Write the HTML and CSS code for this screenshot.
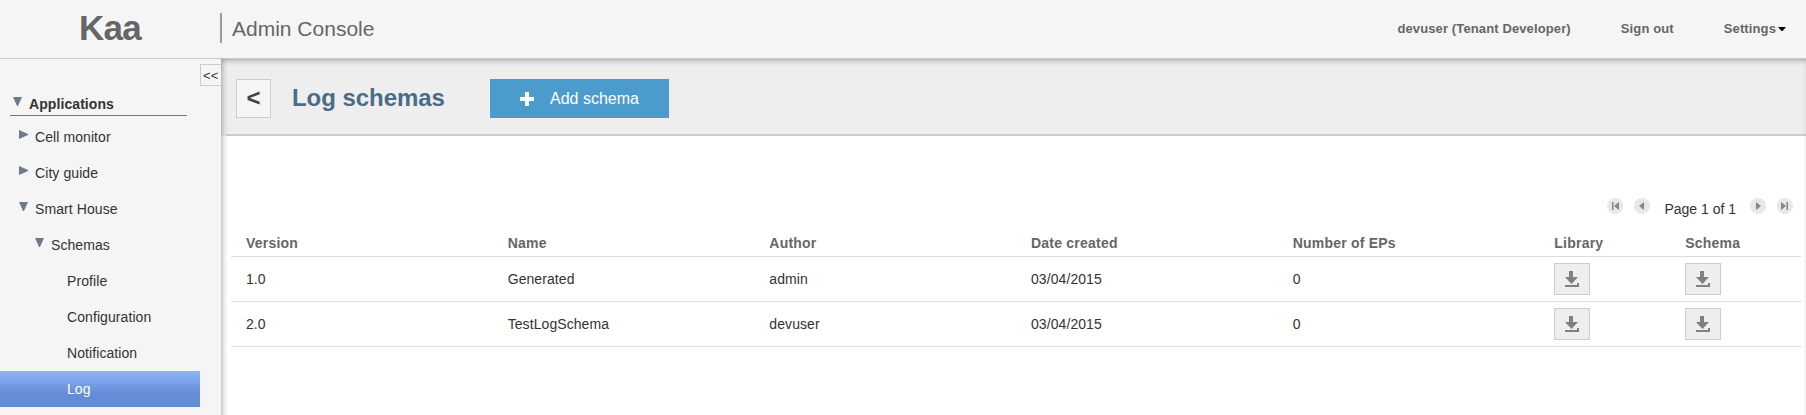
FILE: index.html
```html
<!DOCTYPE html>
<html lang="en">
<head>
<meta charset="utf-8">
<title>Kaa Admin Console</title>
<link rel="stylesheet" href="styles.css">
</head>
<body>
<svg class="defs" width="0" height="0">
  <symbol id="down" viewBox="0 0 9 9"><path d="M0 0h9L5 9H4z"/></symbol>
  <symbol id="right" viewBox="0 0 9 9"><path d="M0 0L9 4v1L0 9z"/></symbol>
  <symbol id="download" viewBox="0 0 14 16"><path d="M4 0h4v6h5L6.500 13 0 6h4zM0 14h12v-2h2v4H0z"/></symbol>
</svg>
<header class="header">
  <div class="logo">Kaa</div>
  <div class="console">Admin Console</div>
  <nav class="usernav">
    <span class="user">devuser (Tenant Developer)</span>
    <span class="signout">Sign out</span>
    <span class="settings">Settings<svg class="caret" width="8" height="4" viewBox="0 0 8 4"><path d="M0 0h8L4.500 4h-1z"/></svg></span>
  </nav>
</header>
<div class="body">
  <aside class="sidebar">
    <div class="collapse">&lt;&lt;</div>
    <div class="root"><svg class="arrow"><use href="#down"/></svg>Applications</div>
    <div class="item level1"><svg class="arrow"><use href="#right"/></svg>Cell monitor</div>
    <div class="item level1"><svg class="arrow"><use href="#right"/></svg>City guide</div>
    <div class="item level1"><svg class="arrow"><use href="#down"/></svg>Smart House</div>
    <div class="item level2"><svg class="arrow"><use href="#down"/></svg>Schemas</div>
    <div class="item leaf">Profile</div>
    <div class="item leaf">Configuration</div>
    <div class="item leaf">Notification</div>
    <div class="item leaf selected">Log</div>
  </aside>
  <main class="content">
    <div class="toolbar">
      <button class="back">&lt;</button>
      <h1 class="title">Log schemas</h1>
      <button class="add"><svg width="14" height="14" viewBox="0 0 14 14"><path d="M5 0h4v5h5v4H9v5H5V9H0V5h5z" fill="#fff"/></svg>Add schema</button>
    </div>
    <div class="pager">
      <svg class="page-btn" viewBox="0 0 16 16"><circle cx="8" cy="8" r="8"/><path d="M5 4h1.500v8H5zM12 4v8L7 8z"/></svg>
      <svg class="page-btn" viewBox="0 0 16 16"><circle cx="8" cy="8" r="8"/><path d="M10 4v8L5 8z"/></svg>
      <span class="page-label">Page 1 of 1</span>
      <svg class="page-btn" viewBox="0 0 16 16"><circle cx="8" cy="8" r="8"/><path d="M6 4v8l5-4z"/></svg>
      <svg class="page-btn" viewBox="0 0 16 16"><circle cx="8" cy="8" r="8"/><path d="M4 4v8l5-4zM9.500 4H11v8H9.500z"/></svg>
    </div>
    <div class="table">
      <div class="row head"><span>Version</span><span>Name</span><span>Author</span><span>Date created</span><span>Number of EPs</span><span>Library</span><span>Schema</span></div>
      <div class="row"><span>1.0</span><span>Generated</span><span>admin</span><span>03/04/2015</span><span>0</span><span><button class="dl"><svg><use href="#download"/></svg></button></span><span><button class="dl"><svg><use href="#download"/></svg></button></span></div>
      <div class="row"><span>2.0</span><span>TestLogSchema</span><span>devuser</span><span>03/04/2015</span><span>0</span><span><button class="dl"><svg><use href="#download"/></svg></button></span><span><button class="dl"><svg><use href="#download"/></svg></button></span></div>
    </div>
  </main>
</div>
</body>
</html>
```
FILE: styles.css
```css
* { box-sizing: border-box; }
body {
  margin: 0;
  height: 415px;
  overflow: hidden;
  display: flex;
  flex-direction: column;
  background: #f5f5f5;
  color: #333;
  font: 14px/18px Arial, "Liberation Sans", sans-serif;
  letter-spacing: 0.08px;
}
button { font-family: inherit; padding: 0; margin: 0; border-radius: 0; }
.defs { display: none; }

.header {
  height: 59px;
  flex: none;
  display: flex;
  align-items: center;
  border-bottom: 1px solid #c8c8c8;
  color: #666;
}
.logo {
  width: 220px;
  text-align: center;
  font-size: 35px;
  line-height: 40px;
  font-weight: bold;
  letter-spacing: -0.8px;
  padding-bottom: 2px;
}
.console {
  height: 30px;
  line-height: 31px;
  margin-bottom: 2px;
  padding-left: 10px;
  border-left: 2px solid #999;
  font-size: 21px;
  letter-spacing: 0;
}
.usernav {
  margin-left: auto;
  padding: 0 20px 1px 0;
  display: flex;
  gap: 50px;
  font-size: 13px;
  font-weight: bold;
  letter-spacing: 0.12px;
}
.settings { display: flex; align-items: center; gap: 2px; }

.body { flex: 1; display: flex; min-height: 0; }
.sidebar { width: 221px; flex: none; display: flex; flex-direction: column; }
.collapse {
  align-self: flex-end;
  width: 21px;
  height: 22px;
  margin-top: 5px;
  border: 1px solid #ccc;
  border-right: 0;
  padding-left: 2px;
  font-size: 13px;
  line-height: 21px;
}
.root {
  width: 177px;
  height: 19px;
  margin: 11px 0 3px 10px;
  padding-left: 3px;
  display: flex;
  gap: 7px;
  border-bottom: 1px solid #777;
  font-weight: bold;
  line-height: 14px;
}
.arrow { width: 9px; height: 9px; flex: none; fill: #6f7b8c; }
.item { width: 200px; height: 36px; flex: none; display: flex; gap: 7px; line-height: 36px; }
.item .arrow { margin-top: 11px; }
.level1 { padding-left: 19px; }
.level2 { padding-left: 35px; }
.leaf { padding-left: 67px; }
.selected { color: #fff; background: linear-gradient(#8fb4f6, #628cd5 65%, #628cd5); }

.content {
  flex: 1;
  padding: 0 5px;
  background: #fff;
  position: relative;
}
.content::after {
  content: "";
  position: absolute;
  inset: 0 -4px -20px 0;
  box-shadow: inset 0 0 7px rgba(0, 0, 0, 0.45);
  pointer-events: none;
}
.toolbar {
  height: 77px;
  margin: 0 -5px;
  padding: 20px 15px 0;
  display: flex;
  background: linear-gradient(#ccc, #ccc) 5px 100% / 100% 2px no-repeat #eee;
}
.back {
  width: 35px;
  height: 39px;
  border: 1px solid #ccc;
  padding-bottom: 2px;
  background: #f5f5f5;
  color: #444;
  font-size: 24px;
  font-weight: bold;
}
.title {
  margin: 0 0 0 21px;
  width: 198px;
  font-size: 24px;
  line-height: 38px;
  letter-spacing: -0.05px;
  color: #4b6c87;
}
.add {
  width: 179px;
  height: 39px;
  border: 0;
  background: #4b9bcd;
  color: #fff;
  font-size: 16px;
  display: flex;
  align-items: center;
  justify-content: center;
  gap: 16px;
}
.pager {
  height: 36px;
  margin-top: 62px;
  padding-right: 8px;
  display: flex;
  justify-content: flex-end;
  gap: 11px;
}
.page-btn { width: 16px; height: 16px; fill: #888; }
.page-btn circle { fill: #e8e8e8; }
.page-label { margin: 2px 3px 0; letter-spacing: 0; }
.table { margin: 0 0 0 5px; width: 1570px; }
.row {
  height: 45px;
  display: grid;
  grid-template-columns: repeat(5, 2fr) 1fr 1fr;
  align-items: center;
  border-bottom: 1px solid #ddd;
}
.row > span { padding-left: 15px; }
.row.head { height: 23px; align-items: start; font-weight: bold; letter-spacing: 0.22px; color: #666; }
.dl {
  width: 36px;
  height: 32px;
  border: 1px solid #ccc;
  background: #eee;
  display: flex;
  align-items: center;
  justify-content: center;
}
.dl svg { width: 14px; height: 16px; fill: #808080; }
```
